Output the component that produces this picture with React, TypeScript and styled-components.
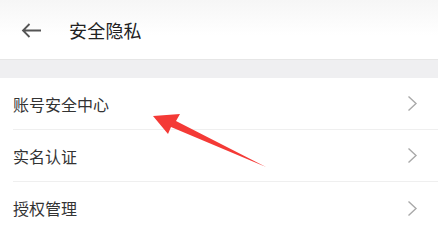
import * as React from "react"
import styled, { createGlobalStyle } from "styled-components"

const GlobalStyle = createGlobalStyle`
  html, body {
    margin: 0;
    padding: 0;
    background: #ffffff;
    font-family: "Noto Sans CJK SC", "Noto Sans", sans-serif;
  }
`

const Page = styled.div`
  position: relative;
  width: 438px;
  height: 232px;
  overflow: hidden;
  background: #ffffff;
`

const Header = styled.header`
  height: 59px;
  display: flex;
  align-items: center;
  padding-left: 21px;
  background: linear-gradient(#f6f6f6, #ffffff 60%);
  border-bottom: 1px solid #e6e6e6;
`

const BackButton = styled.button`
  width: 22px;
  height: 16px;
  padding: 0;
  border: none;
  background: transparent;
  display: flex;
  align-items: center;
  margin-right: 26px;
  margin-top: 1px;
`

const Title = styled.h1`
  margin: 0;
  font-size: 18px;
  font-weight: 400;
  color: #222;
  letter-spacing: 0.2px;
`

const Gap = styled.div`
  height: 18px;
  background: #efeff1;
`

const List = styled.ul`
  list-style: none;
  margin: 0;
  padding: 0 0 0 13px;
`

const Row = styled.li<{ last?: boolean }>`
  height: ${({ last }) => (last ? "52px" : "51px")};
  display: flex;
  align-items: center;
  justify-content: space-between;
  padding-right: 20px;
  border-bottom: ${({ last }) => (last ? "none" : "1px solid #efefef")};
`

const Label = styled.span`
  font-size: 16px;
  color: #333;
`

const Annotation = styled.svg`
  position: absolute;
  left: 0;
  top: 0;
  pointer-events: none;
`

const Chevron = () => (
  <svg width="11" height="17" viewBox="0 0 11 17">
    <path d="M1.5 1.5 L9 8.5 L1.5 15.5" fill="none" stroke="#a9a9a9" strokeWidth="1.4" />
  </svg>
)

const items = ["账号安全中心", "实名认证", "授权管理"]

const App: React.FC = () => (
  <Page>
    <GlobalStyle />
    <Header>
      <BackButton>
        <svg width="21" height="15" viewBox="0 0 21 15">
          <path d="M20 7.5 H2 M8.5 1 L2 7.5 L8.5 14" fill="none" stroke="#555" strokeWidth="1.8" />
        </svg>
      </BackButton>
      <Title>安全隐私</Title>
    </Header>
    <Gap />
    <List>
      {items.map((t, i) => (
        <Row key={t} last={i === items.length - 1}>
          <Label>{t}</Label>
          <Chevron />
        </Row>
      ))}
    </List>
    <Annotation width="438" height="232" viewBox="0 0 438 232">
      <polygon
        points="153,116 180,114 176,121 266,167 171,127 168,134"
        fill="#f43a36"
      />
    </Annotation>
  </Page>
)

export default App
